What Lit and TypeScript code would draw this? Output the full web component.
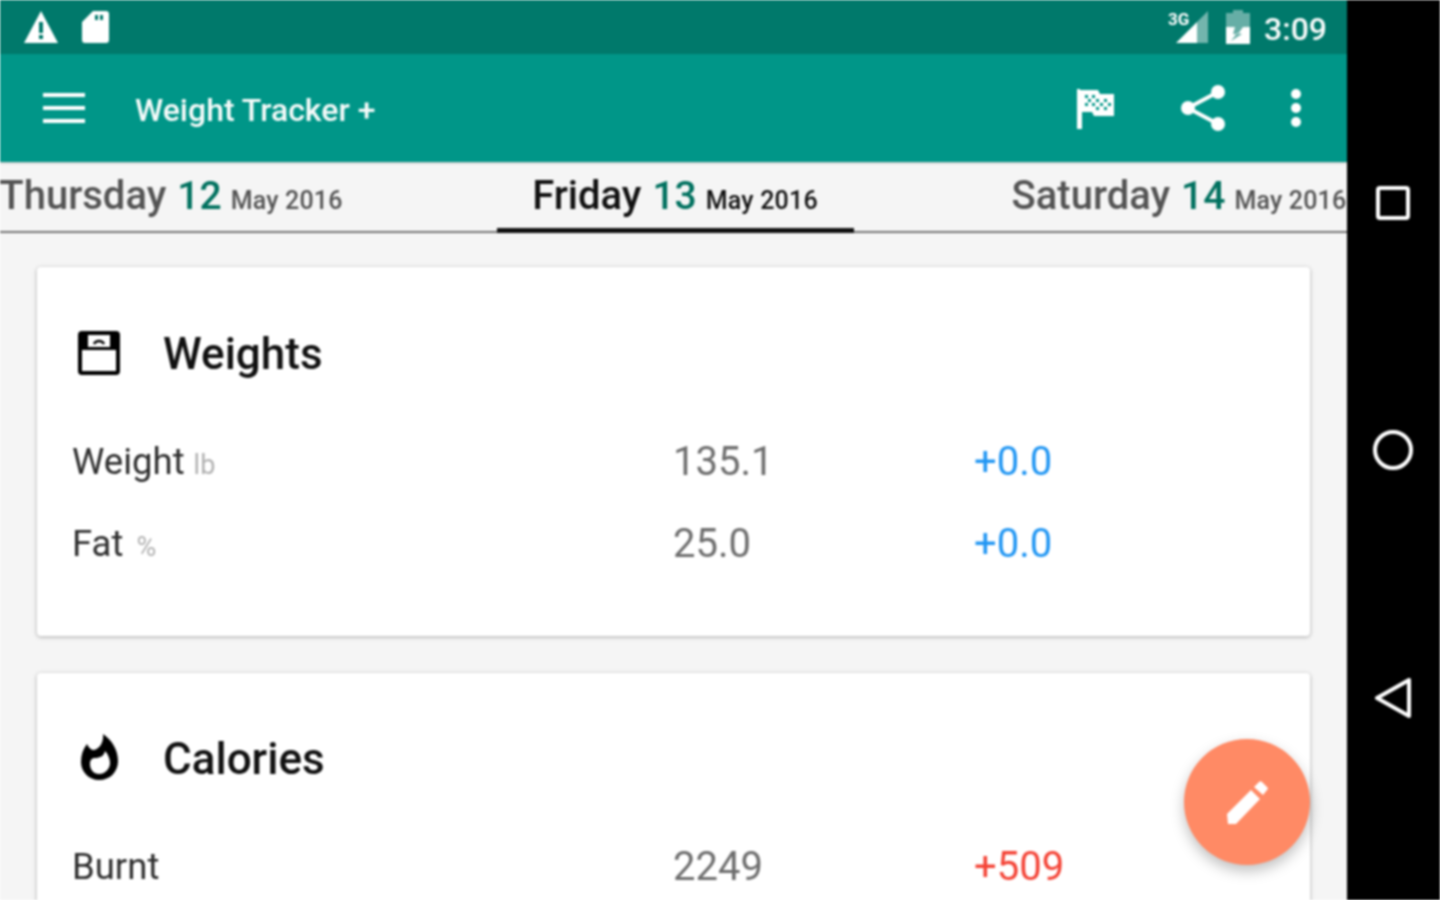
import { LitElement, html, css } from "lit";
import { customElement } from "lit/decorators.js";

const tabs = [
  { d: "Thursday", n: "12", cls: "" },
  { d: "Friday", n: "13", cls: "active" },
  { d: "Saturday", n: "14", cls: "" },
];

@customElement("app-root")
export class AppRoot extends LitElement {
  static styles = css`
    :host { display: flex; width: 1440px; height: 900px; overflow: hidden; font-family: Roboto, "Liberation Sans", sans-serif; background: #000; filter: blur(0.9px); }
    .screen { position: relative; width: 1347px; flex: none; height: 900px; overflow: hidden; display: flex; flex-direction: column; background: #f5f5f5; }
    .status { height: 54px; flex: none; background: #00796b; display: flex; align-items: center; padding: 0 20px 0 24px; color: #f7fbfa; }
    .status .left { display: flex; gap: 24px; align-items: center; flex: 1; }
    .status .time { font-size: 32px; font-weight: 500; margin-left: 14px; padding-top: 3px; }
    .sig { margin-right: 18px; }
    .bar { height: 108px; flex: none; background: #009688; display: flex; align-items: center; padding: 0 0 0 43px; color: #f6fbfa; box-shadow: 0 1px 2px rgba(0,0,0,.25); z-index: 1; }
    .title { font-size: 32px; font-weight: 500; margin-left: 50px; flex: 1; padding-top: 4px; }
    .bar svg.flag { margin-right: 67px; }
    .bar svg.share { margin-right: 66px; }
    .bar svg.dots { margin-right: 46px; }
    .tabs { height: 71px; flex: none; display: flex; gap: 147px; margin-left: -7.5px; border-bottom: 2px solid #757575; box-sizing: border-box; width: 1355px; }
    .tab { flex: none; width: 357px; display: flex; justify-content: center; align-items: baseline; white-space: nowrap; box-sizing: border-box; padding-top: 10px; color: #545454; font-weight: 500; height: 71px; font-size: 40px; }
    .tab.active { color: #111; border-bottom: 5px solid #111; }
    .tab .n { color: #00715f; margin-left: 11px; font-size: 39px; }
    .tab .m { font-size: 25px; margin-left: 9px; letter-spacing: 0.2px; }
    .content { padding: 34px 37px 0; display: flex; flex-direction: column; gap: 37px; }
    .card { background: #fff; border-radius: 4px; box-shadow: 0 1px 4px rgba(0,0,0,.3); padding: 0 36px; flex: none; box-sizing: border-box; }
    .card.one { height: 369px; }
    .card.two { height: 320px; }
    .head { display: flex; align-items: center; height: 44px; margin-top: 65px; }
    .card.two .head { margin-top: 64px; }
    .ico { width: 90px; flex: none; display: flex; align-items: center; }
    .ico svg.scale { margin-left: 5px; margin-top: -3px; }
    .ico svg.flame { margin-left: 8px; margin-top: -4px; }
    .head h2 { margin: 0; font-size: 44px; font-weight: 500; color: #111; }
    .rows { margin-top: 44px; display: grid; grid-template-columns: 600px 301px 1fr; grid-auto-rows: 82px; align-items: center; }
    .label { font-size: 36.5px; color: #2e2e2e; margin-left: -1px; }
    .unit { font-size: 27px; color: #b0b0b0; margin-left: 9px; }
    .unit.p { margin-left: 13px; }
    .val { font-size: 40px; color: #6e6e6e; }
    .delta { font-size: 40px; }
    .blue { color: #2196f3; }
    .red { color: #f44336; }
    .fab { position: absolute; left: 1184px; top: 739px; width: 126px; height: 126px; border-radius: 50%; background: #ff8a65; box-shadow: 0 6px 14px rgba(0,0,0,.25); display: flex; align-items: center; justify-content: center; }
    .nav { flex: 1; background: #000; display: flex; flex-direction: column; align-items: center; padding: 186px 2px 0 0; gap: 208px; }
  `;

  render() {
    return html`
      <div class="screen">
        <div class="status">
          <div class="left">
            <svg width="34" height="32" viewBox="0 0 34 32"><path fill="#fff" fill-rule="evenodd" d="M17 0 34 32H0ZM15 11v11h4V11ZM15 24v4h4v-4Z"/></svg>
            <svg width="27" height="32" viewBox="0 0 27 32"><path fill="#fff" fill-rule="evenodd" d="M11 0H24a3 3 0 0 1 3 3V29a3 3 0 0 1-3 3H3a3 3 0 0 1-3-3V11ZM13 4v5h3V4ZM18 4v5h3V4Z"/></svg>
          </div>
          <svg class="sig" width="40" height="34" viewBox="0 0 40 34">
            <path fill="#fff" fill-opacity=".45" d="M40 1V33H29V12Z"/>
            <path fill="#fff" d="M29 12V33H8Z"/>
            <text x="0" y="15" font-size="17" font-weight="700" fill="#fff" font-family="Roboto">3G</text>
          </svg>
          <svg width="24" height="34" viewBox="0 0 24 34">
            <path fill="#fff" fill-opacity=".4" d="M7 0H17V3H24V34H0V3H7Z"/>
            <path fill="#fff" d="M0 17H9L7 24H12L17 17H24V34H0ZM5 31 16 24 11 23Z"/>
          </svg>
          <div class="time">3:09</div>
        </div>
        <div class="bar">
          <svg width="42" height="30" viewBox="0 0 42 30"><path fill="#fff" d="M0 0H42V4H0ZM0 13H42V17H0ZM0 26H42V30H0Z"/></svg>
          <div class="title">Weight Tracker +</div>
          <svg class="flag" width="37" height="41" viewBox="0 0 37 41">
            <path fill="#fff" fill-rule="evenodd" d="M0 1H3V2H21L23 6H37V28H17L15 24H5V41H0ZM8 7v3h3V7ZM15 7v3h3V7ZM11 11v3h3v-3ZM19 11v3h3v-3ZM27 11v3h3v-3ZM8 15v3h3v-3ZM15 15v3h3v-3ZM23 15v3h3v-3ZM31 15v3h3v-3ZM19 19v3h3v-3ZM27 19v3h3v-3Z"/>
          </svg>
          <svg class="share" width="44" height="46" viewBox="0 0 44 46">
            <g fill="#fff"><circle cx="37" cy="7" r="7"/><circle cx="7" cy="23" r="7"/><circle cx="37" cy="39" r="7"/></g>
            <path stroke="#fff" stroke-width="4" fill="none" d="M37 7 7 23 37 39"/>
          </svg>
          <svg class="dots" width="10" height="38" viewBox="0 0 10 38"><g fill="#fff"><circle cx="5" cy="5" r="5"/><circle cx="5" cy="19" r="5"/><circle cx="5" cy="33" r="5"/></g></svg>
        </div>
        <div class="tabs">
          ${tabs.map((t) => html`<div class="tab ${t.cls}"><span>${t.d}</span><span class="n">${t.n}</span><span class="m">May 2016</span></div>`)}
        </div>
        <div class="content">
          <div class="card one">
            <div class="head">
              <div class="ico">
                <svg class="scale" width="42" height="44" viewBox="0 0 42 44">
                  <path fill="#000" fill-rule="evenodd" d="M4 0H38a4 4 0 0 1 4 4V40a4 4 0 0 1-4 4H4a4 4 0 0 1-4-4V4a4 4 0 0 1 4-4ZM4 19V40H38V19ZM10 4V16H32V4Z"/>
                  <path fill="none" stroke="#000" stroke-width="2.5" d="M16 13c2-4 8-4 10 0"/>
                </svg>
              </div>
              <h2>Weights</h2>
            </div>
            <div class="rows">
              <div class="label">Weight<span class="unit">lb</span></div><div class="val">135.1</div><div class="delta blue">+0.0</div>
              <div class="label">Fat<span class="unit p">%</span></div><div class="val">25.0</div><div class="delta blue">+0.0</div>
            </div>
          </div>
          <div class="card two">
            <div class="head">
              <div class="ico">
                <svg class="flame" width="37" height="46" viewBox="0 0 37 46"><path fill="#000" fill-rule="evenodd" d="M22 0C31 6 37 16 37 27 37 38 29 46 18 46 8 46 0 38 0 28 0 21 2 15 6 10 8 14 10 16 13 16 18 15 23 9 22 0ZM9 30C9 26 11 24 14 24 19 24 23 22 24 17 27 20 29 25 29 29 29 35 24 40 18 40 13 40 9 36 9 30Z"/></svg>
              </div>
              <h2>Calories</h2>
            </div>
            <div class="rows">
              <div class="label">Burnt</div><div class="val">2249</div><div class="delta red">+509</div>
            </div>
          </div>
        </div>
        <div class="fab">
          <svg width="41" height="43" viewBox="0 0 41 43"><path fill="#fff" d="M0 33 24 9 33 18 9 43H1ZM27 6 32 1a2 2 0 0 1 3 0L40 6a2 2 0 0 1 0 3L36 14Z"/></svg>
        </div>
      </div>
      <div class="nav">
        <svg width="34" height="34" viewBox="0 0 34 34"><rect x="2" y="2" width="30" height="30" rx="2" fill="none" stroke="#fff" stroke-width="4"/></svg>
        <svg width="42" height="42" viewBox="0 0 42 42"><circle cx="21" cy="22" r="18" fill="none" stroke="#fff" stroke-width="4"/></svg>
        <svg width="38" height="42" viewBox="0 0 38 42"><path d="M3 20 35 2V38Z" fill="none" stroke="#fff" stroke-width="4" stroke-linejoin="round"/></svg>
      </div>
    `;
  }
}
